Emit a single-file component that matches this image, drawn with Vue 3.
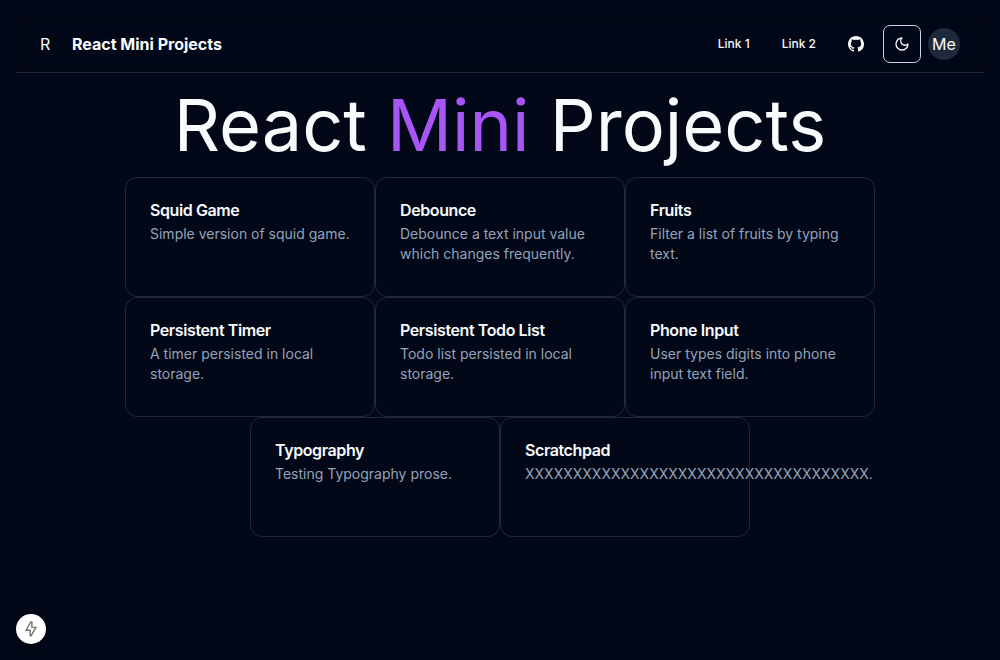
<script setup>
const projects = [
  { title: 'Squid Game', text: 'Simple version of squid game.' },
  { title: 'Debounce', text: 'Debounce a text input value which changes frequently.' },
  { title: 'Fruits', text: 'Filter a list of fruits by typing text.' },
  { title: 'Persistent Timer', text: 'A timer persisted in local storage.' },
  { title: 'Persistent Todo List', text: 'Todo list persisted in local storage.' },
  { title: 'Phone Input', text: 'User types digits into phone input text field.' },
  { title: 'Typography', text: 'Testing Typography prose.' },
  { title: 'Scratchpad', text: 'X'.repeat(36) + '.' },
]
</script>

<template>
  <div class="page">
    <header class="bar">
      <a class="logo">R</a>
      <a class="brand">React Mini Projects</a>
      <nav class="nav">
        <a class="link">Link 1</a>
        <a class="link">Link 2</a>
        <a class="github" aria-label="GitHub">
          <svg width="16" height="16" viewBox="0 0 16 16" fill="currentColor">
            <path d="M8 0C3.58 0 0 3.58 0 8c0 3.54 2.29 6.53 5.47 7.59.4.07.55-.17.55-.38 0-.19-.01-.82-.01-1.49-2.01.37-2.53-.49-2.69-.94-.09-.23-.48-.94-.82-1.13-.28-.15-.68-.52-.01-.53.63-.01 1.08.58 1.23.82.72 1.21 1.87.87 2.33.66.07-.52.28-.87.51-1.07-1.78-.2-3.64-.89-3.64-3.95 0-.87.31-1.59.82-2.15-.08-.2-.36-1.02.08-2.12 0 0 .67-.21 2.2.82.64-.18 1.32-.27 2-.27s1.36.09 2 .27c1.53-1.04 2.2-.82 2.2-.82.44 1.1.16 1.92.08 2.12.51.56.82 1.27.82 2.15 0 3.07-1.87 3.75-3.65 3.95.29.25.54.73.54 1.48 0 1.07-.01 1.93-.01 2.2 0 .21.15.46.55.38A8.01 8.01 0 0 0 16 8c0-4.42-3.58-8-8-8z" />
          </svg>
        </a>
        <button class="theme" aria-label="Toggle theme">
          <svg width="16" height="16" viewBox="0 0 24 24" fill="none" stroke="currentColor" stroke-width="2" stroke-linecap="round" stroke-linejoin="round">
            <path d="M12 3a6 6 0 0 0 9 9 9 9 0 1 1-9-9Z" />
          </svg>
        </button>
        <span class="avatar">Me</span>
      </nav>
    </header>

    <main>
      <h1>React <span>Mini</span> Projects</h1>
      <div class="cards">
        <article v-for="p in projects" :key="p.title" class="card">
          <h3>{{ p.title }}</h3>
          <p>{{ p.text }}</p>
        </article>
      </div>
    </main>

    <div class="bolt">
      <svg width="18" height="18" viewBox="0 0 18 18" fill="none" stroke="#777" stroke-width="1.4" stroke-linejoin="miter">
        <path d="M8.9 1.9 4.1 10.2H8.1V15.7H9.1L13.9 7.4H9.9V1.9Z" />
      </svg>
    </div>
  </div>
</template>

<style>
body {
  margin: 0;
  background: #020817;
}
</style>

<style scoped>
.page {
  box-sizing: border-box;
  min-height: 660px;
  padding: 16px;
  background: #020817;
  color: #f8fafc;
  font-family: Inter, "Liberation Sans", sans-serif;
  font-size: 16px;
  line-height: 24px;
}
.bar {
  display: flex;
  align-items: center;
  height: 56px;
  padding: 0 24px;
  border-bottom: 1px solid #1e293b;
  box-shadow: inset 0 0 16px rgba(0, 0, 0, 0.35);
}
.logo {
  width: 32px;
}
.brand {
  font-weight: 700;
}
.nav {
  display: flex;
  align-items: center;
  margin-left: auto;
}
.link {
  padding: 0 16px;
  font-size: 12px;
  font-weight: 500;
  line-height: 16px;
}
.github {
  display: flex;
  padding: 0 16px;
}
.theme {
  box-sizing: border-box;
  display: flex;
  align-items: center;
  justify-content: center;
  width: 38px;
  height: 38px;
  margin: 0 7px 0 3px;
  padding: 0;
  border: 1px solid #cbd5e1;
  border-radius: 7px;
  background: transparent;
  color: inherit;
}
.avatar {
  display: flex;
  align-items: center;
  justify-content: center;
  width: 32px;
  height: 32px;
  border-radius: 50%;
  background: #1e293b;
}
h1 {
  margin: 16px 0;
  font-size: 72px;
  line-height: 72px;
  font-weight: 400;
  text-align: center;
}
h1 span {
  color: #a855f7;
}
.cards {
  display: flex;
  flex-wrap: wrap;
  justify-content: center;
  width: 750px;
  margin: 0 auto;
}
.card {
  box-sizing: border-box;
  width: 250px;
  height: 120px;
  padding: 24px;
  border: 1px solid #1e293b;
  border-radius: 12px;
}
h3 {
  margin: 0 0 6px;
  font-size: 16px;
  line-height: 16px;
  font-weight: 600;
  letter-spacing: -0.4px;
}
p {
  margin: 0;
  color: #94a3b8;
  font-size: 14px;
  line-height: 20px;
}
.bolt {
  position: fixed;
  left: 16px;
  bottom: 16px;
  display: flex;
  align-items: center;
  justify-content: center;
  width: 30px;
  height: 30px;
  border-radius: 50%;
  background: #fff;
  box-shadow: 0 11px 40px rgba(0, 0, 0, 0.25), 0 2px 10px rgba(0, 0, 0, 0.12);
}
</style>
